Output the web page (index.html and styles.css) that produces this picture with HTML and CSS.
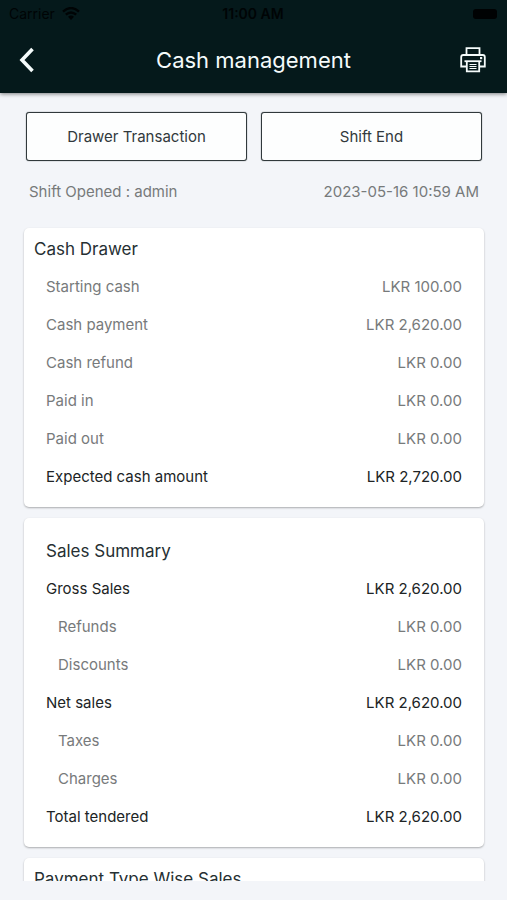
FILE: index.html
```html
<!DOCTYPE html>
<html lang="en">
<head>
<meta charset="utf-8">
<meta name="viewport" content="width=device-width, initial-scale=1">
<title>Cash management</title>
<link rel="stylesheet" href="styles.css">
</head>
<body>
<header class="app-header">
  <div class="status-bar">
    <span class="carrier">Carrier
      <svg class="wifi" viewBox="0 0 18 13" aria-hidden="true"><path d="M1 4.600Q9-2.400 17 4.600M3.800 7.600Q9 3.200 14.200 7.600" fill="none" stroke="currentColor" stroke-width="2.400"/><path d="M6 9.700Q9 7.300 12 9.700L9 13Z" fill="currentColor"/></svg>
    </span>
    <span class="clock">11:00 AM</span>
    <span class="battery"></span>
  </div>
  <div class="title-bar">
    <button class="icon-button back" type="button" aria-label="Back">
      <svg class="chevron" viewBox="0 0 16 26" aria-hidden="true"><path d="M13.500 2L3 13L13.500 24" fill="none" stroke="currentColor" stroke-width="3.600"/></svg>
    </button>
    <h1 class="page-title">Cash management</h1>
    <button class="icon-button print" type="button" aria-label="Print">
      <svg class="printer" viewBox="0 0 26 26" aria-hidden="true"><g fill="none" stroke="currentColor" stroke-width="1.800"><path d="M6.500 8V1.200H19.500V8"/><path d="M6.500 19.500H1.200V10Q1.200 8 3.200 8H22.800Q24.800 8 24.800 10V19.500H19.500"/><path d="M4.500 14.200H21.500"/><path d="M6.800 14.200V24.300H19.200V14.200"/><path d="M9.500 17.500H16.500M9.500 19.500H16.500M9.500 21.500H16.500" stroke-width="1.200"/></g><rect x="20" y="10" width="2.200" height="2.200" fill="currentColor"/></svg>
    </button>
  </div>
</header>
<main class="content">
  <div class="actions">
    <button class="action" type="button">Drawer Transaction</button>
    <button class="action" type="button">Shift End</button>
  </div>
  <div class="shift">
    <span>Shift Opened : admin</span>
    <time datetime="2023-05-16T10:59">2023-05-16 10:59 AM</time>
  </div>
  <section class="card">
    <h2 class="card-title">Cash Drawer</h2>
    <dl class="rows">
      <div class="row"><dt>Starting cash</dt><dd>LKR 100.00</dd></div>
      <div class="row"><dt>Cash payment</dt><dd>LKR 2,620.00</dd></div>
      <div class="row"><dt>Cash refund</dt><dd>LKR 0.00</dd></div>
      <div class="row"><dt>Paid in</dt><dd>LKR 0.00</dd></div>
      <div class="row"><dt>Paid out</dt><dd>LKR 0.00</dd></div>
      <div class="row total"><dt>Expected cash amount</dt><dd>LKR 2,720.00</dd></div>
    </dl>
  </section>
  <section class="card summary">
    <h2 class="card-title">Sales Summary</h2>
    <dl class="rows">
      <div class="row total"><dt>Gross Sales</dt><dd>LKR 2,620.00</dd></div>
      <div class="row sub"><dt>Refunds</dt><dd>LKR 0.00</dd></div>
      <div class="row sub"><dt>Discounts</dt><dd>LKR 0.00</dd></div>
      <div class="row total"><dt>Net sales</dt><dd>LKR 2,620.00</dd></div>
      <div class="row sub"><dt>Taxes</dt><dd>LKR 0.00</dd></div>
      <div class="row sub"><dt>Charges</dt><dd>LKR 0.00</dd></div>
      <div class="row total"><dt>Total tendered</dt><dd>LKR 2,620.00</dd></div>
    </dl>
  </section>
  <section class="card">
    <h2 class="card-title">Payment Type Wise Sales</h2>
  </section>
</main>
</body>
</html>
```
FILE: styles.css
```css
* {
  box-sizing: border-box;
}

body {
  display: flex;
  flex-direction: column;
  height: 100vh;
  margin: 0;
  padding-bottom: 19px;
  background: #f3f5f9;
  color: #777a7b;
  font: 15px/20px Inter, "Liberation Sans", sans-serif;
}

h1, h2, dl, dd {
  margin: 0;
  font-weight: 400;
}

button {
  font: inherit;
  cursor: pointer;
}

.app-header {
  position: relative;
  z-index: 1;
  flex: none;
  background: #05191b;
  box-shadow: 0 1px 4px rgba(0, 0, 0, 0.5);
}

.status-bar {
  display: grid;
  grid-template-columns: 1fr auto 1fr;
  align-items: center;
  height: 27px;
  padding: 0 10px 0 9px;
  color: #000405;
  font-size: 14px;
}

.carrier {
  display: flex;
  align-items: center;
  gap: 7px;
}

.wifi {
  width: 18px;
  height: 13px;
}

.clock {
  font-weight: 600;
}

.battery {
  justify-self: end;
  width: 24px;
  height: 10px;
  border-radius: 3px;
  background: #000203;
}

.title-bar {
  display: grid;
  grid-template-columns: 56px 1fr 56px;
  align-items: center;
  height: 66px;
  padding: 0 7px;
  color: #f5fbfb;
}

.page-title {
  font-size: 22px;
  line-height: 28px;
  text-align: center;
}

.icon-button {
  display: flex;
  align-items: center;
  height: 48px;
  padding: 0 14px;
  border: 0;
  background: none;
  color: inherit;
}

.back {
  padding: 0 12px;
}

.print {
  justify-content: flex-end;
}

.chevron {
  flex: none;
  width: 16px;
  height: 26px;
}

.printer {
  flex: none;
  width: 26px;
  height: 26px;
}

.content {
  flex: 1;
  min-height: 0;
  overflow: hidden;
  padding: 19px 23px 0 24px;
}

.actions {
  display: grid;
  grid-template-columns: 1fr 1fr;
  gap: 14px;
  padding: 0 2px;
}

.action {
  height: 49px;
  border: 1px solid #31393c;
  border-radius: 3px;
  background: #fdfefe;
  box-shadow: 0 0 1px #31393c;
  color: #31393c;
}

.shift {
  display: flex;
  justify-content: space-between;
  padding: 21px 5px 26px;
}

.card {
  margin-bottom: 11px;
  padding: 2px 10px 11px;
  border-radius: 5px;
  background: #fff;
  box-shadow: 0 1px 2px rgba(0, 0, 0, 0.3);
}

.card-title {
  color: #263033;
  font-size: 17px;
  line-height: 38px;
}

.rows {
  padding: 0 12px;
}

.row {
  display: flex;
  justify-content: space-between;
  line-height: 38px;
}

.total {
  color: #202425;
}

.sub dt {
  padding-left: 12px;
}

.summary {
  padding-top: 14px;
}

.summary .card-title {
  padding-left: 12px;
}
```
